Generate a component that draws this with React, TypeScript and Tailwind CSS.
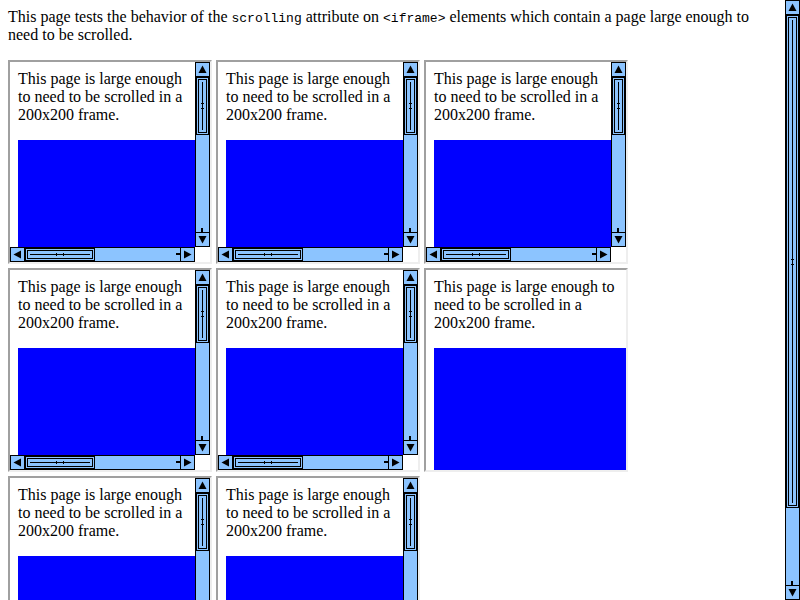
import React from 'react';

const BAR = 'bg-[#8cc4ff]';

const Arrow: React.FC<{ dir: 'up' | 'down' | 'left' | 'right' }> = ({ dir }) => {
  const pts = {
    up: '0.5,8 4.5,0.5 8.5,8',
    down: '0.5,1 4.5,8.5 8.5,1',
    left: '8,0.5 0.5,4.5 8,8.5',
    right: '1,0.5 8.5,4.5 1,8.5',
  }[dir];
  return (
    <svg width="9" height="9" viewBox="0 0 9 9">
      <polygon points={pts} fill="#000" />
    </svg>
  );
};

const Button: React.FC<{ dir: 'up' | 'down' | 'left' | 'right' }> = ({ dir }) => (
  <div className={`w-[15px] h-[15px] shrink-0 border border-black ${BAR} flex items-center justify-center`}>
    <Arrow dir={dir} />
  </div>
);

const VThumb: React.FC<{ len: number }> = ({ len }) => (
  <div className="border border-black p-px shrink-0" style={{ height: len }}>
    <div className="relative h-full border border-black flex justify-center py-[2px]">
      <div className="w-px h-full bg-black" />
      <div className="absolute left-[2px] right-[2px] top-1/2 -mt-[3px] h-px bg-black" />
      <div className="absolute left-[2px] right-[2px] top-1/2 mt-[2px] h-px bg-black" />
    </div>
  </div>
);

const HThumb: React.FC<{ len: number }> = ({ len }) => (
  <div className="border border-black p-px shrink-0 h-full" style={{ width: len }}>
    <div className="relative h-full border border-black flex items-center px-[2px]">
      <div className="h-px w-full bg-black" />
      <div className="absolute top-[2px] bottom-[2px] left-1/2 -ml-[4px] w-px bg-black" />
      <div className="absolute top-[2px] bottom-[2px] left-1/2 ml-[3px] w-px bg-black" />
    </div>
  </div>
);

const VScrollbar: React.FC<{ thumbLen: number; className?: string }> = ({ thumbLen, className }) => (
  <div className={`flex flex-col w-[15px] ${BAR} ${className ?? ''}`}>
    <Button dir="up" />
    <div className="flex-1 flex flex-col border-x border-black">
      <VThumb len={thumbLen} />
    </div>
    <div className="relative">
      <div className="absolute left-[6px] -top-[4px] w-[2px] h-[4px] bg-black" />
      <Button dir="down" />
    </div>
  </div>
);

const HScrollbar: React.FC<{ thumbLen: number }> = ({ thumbLen }) => (
  <div className={`flex h-[15px] ${BAR}`}>
    <Button dir="left" />
    <div className="flex-1 flex border-y border-black">
      <HThumb len={thumbLen} />
    </div>
    <div className="relative">
      <div className="absolute top-[6px] -left-[4px] h-[2px] w-[4px] bg-black" />
      <Button dir="right" />
    </div>
  </div>
);

const Content: React.FC<{ textWidth: string }> = ({ textWidth }) => (
  <div className="p-2">
    <p className={`${textWidth} text-[16px] leading-[18px]`}>
      This page is large enough to need to be scrolled in a 200x200 frame.
    </p>
    <div className="mt-4 w-[300px] h-[300px] bg-[#0000ff]" />
  </div>
);

const Frame: React.FC<{ scrolling?: boolean }> = ({ scrolling = true }) => (
  <div className="w-[204px] h-[204px] border-2 border-t-[#a0a0a0] border-l-[#a0a0a0] border-b-[#eeeeee] border-r-[#eeeeee] bg-white">
    {scrolling ? (
      <div className="grid grid-cols-[185px_15px] grid-rows-[185px_15px] w-[200px] h-[200px]">
        <div className="overflow-hidden">
          <Content textWidth="w-[169px]" />
        </div>
        <VScrollbar thumbLen={58} />
        <HScrollbar thumbLen={70} />
        <div className="bg-white" />
      </div>
    ) : (
      <div className="w-[200px] h-[200px] overflow-hidden">
        <Content textWidth="w-[184px]" />
      </div>
    )}
  </div>
);

const App: React.FC = () => {
  const frames = [true, true, true, true, true, false, true, true];
  return (
    <div className="flex w-[800px] h-[600px] overflow-hidden bg-white text-black font-['Liberation_Serif',serif]">
      <div className="flex-1 p-2 overflow-hidden">
        <p className="text-[16px] leading-[18px]">
          This page tests the behavior of the{' '}
          <code className="font-['Liberation_Mono',monospace] text-[13px] leading-none">scrolling</code> attribute on{' '}
          <code className="font-['Liberation_Mono',monospace] text-[13px] leading-none">&lt;iframe&gt;</code> elements
          which contain a page large enough to need to be scrolled.
        </p>
        <div className="mt-4 flex flex-wrap gap-1 w-[630px]">
          {frames.map((s, i) => (
            <Frame key={i} scrolling={s} />
          ))}
        </div>
      </div>
      <VScrollbar thumbLen={493} className="h-[600px] shrink-0" />
    </div>
  );
};

export default App;
